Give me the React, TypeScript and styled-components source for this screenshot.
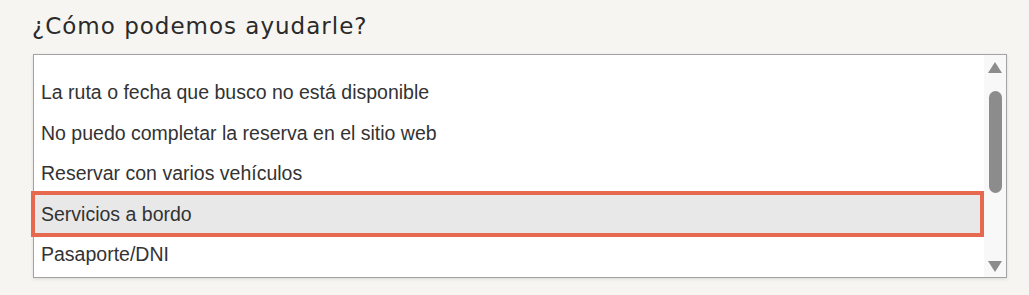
import React from 'react'
import styled, { createGlobalStyle } from 'styled-components'

const colors = {
  page: '#f6f5f1',
  title: '#2a2a2a',
  text: '#333333',
  border: '#a3a3a3',
  selected: '#e8e8e8',
  accent: '#e6694f',
  thumb: '#8c8c8c',
  track: '#f8f8f8',
}

const topics = [
  'La ruta o fecha que busco no está disponible',
  'No puedo completar la reserva en el sitio web',
  'Reservar con varios vehículos',
  'Servicios a bordo',
  'Pasaporte/DNI',
]

const GlobalStyle = createGlobalStyle`
  body {
    margin: 0;
    background: ${colors.page};
  }
`

export default function App() {
  const selected = 'Servicios a bordo'

  return (
    <>
      <GlobalStyle />
      <Page>
        <Title>¿Cómo podemos ayudarle?</Title>
        <ListBox>
          <Options>
            {topics.map((topic) => (
              <Option key={topic} $active={topic === selected}>
                {topic}
              </Option>
            ))}
          </Options>
          <ScrollTrack>
            <Arrow viewBox="0 0 14 11">
              <path d="M7 0 L14 11 L0 11 Z" />
            </Arrow>
            <Thumb />
            <Spacer />
            <Arrow viewBox="0 0 14 11">
              <path d="M0 0 L14 0 L7 11 Z" />
            </Arrow>
          </ScrollTrack>
        </ListBox>
      </Page>
    </>
  )
}

const Page = styled.div`
  display: flex;
  flex-direction: column;
  padding: 12px 22px 0 33px;
  height: 295px;
  box-sizing: border-box;
`

const Title = styled.h2`
  margin: 0 0 13px -1px;
  font-family: 'DejaVu Sans', 'Open Sans', sans-serif;
  font-weight: 400;
  font-size: 23px;
  line-height: 29px;
  color: ${colors.title};
  letter-spacing: 1px;
`

const ListBox = styled.div`
  display: flex;
  height: 224px;
  box-sizing: border-box;
  border: 1px solid ${colors.border};
  background: #fff;
  box-shadow: 0 1px 3px rgba(0, 0, 0, 0.12);
`

const Options = styled.div`
  flex: 1;
  display: flex;
  flex-direction: column;
  padding-top: 17px;
  padding-right: 3px;
`

const Option = styled.div<{ $active?: boolean }>`
  height: 40.6px;
  line-height: 40.6px;
  padding-left: 7px;
  font-family: 'Liberation Sans', Arial, sans-serif;
  font-size: 19.5px;
  color: ${colors.text};
  white-space: nowrap;
  background: ${(props) => (props.$active ? colors.selected : 'transparent')};
  outline: ${(props) => (props.$active ? `4px solid ${colors.accent}` : 'none')};
  outline-offset: -1px;
`

const ScrollTrack = styled.div`
  width: 22px;
  display: flex;
  flex-direction: column;
  align-items: center;
  padding: 7px 0 5px;
  background: ${colors.track};
`

const Arrow = styled.svg`
  width: 14px;
  height: 11px;
  fill: ${colors.thumb};
  flex-shrink: 0;
`

const Thumb = styled.div`
  width: 13px;
  height: 102px;
  margin-top: 18px;
  border-radius: 7px;
  background: ${colors.thumb};
`

const Spacer = styled.div`
  flex: 1;
`
